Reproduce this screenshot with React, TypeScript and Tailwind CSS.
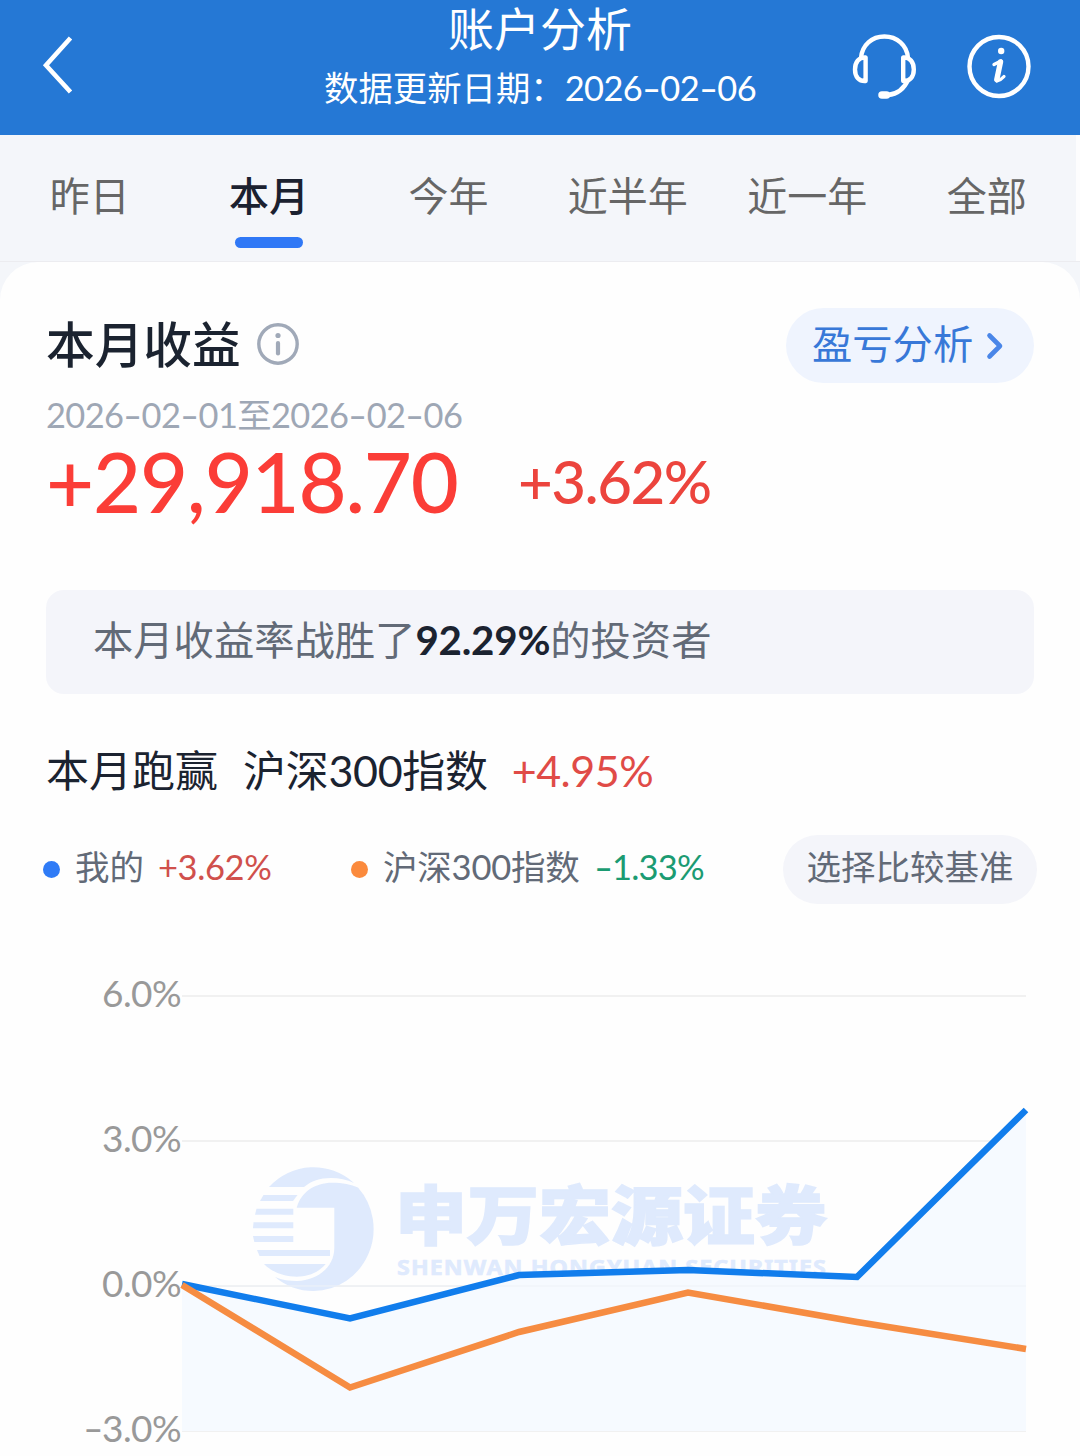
import clsx from 'clsx';

const TABS = ['昨日', '本月', '今年', '近半年', '近一年', '全部'];
const ACTIVE_TAB = '本月';

const GRID = [
  { label: '6.0%', y: 66 },
  { label: '3.0%', y: 211 },
  { label: '0.0%', y: 356 },
  { label: '-3.0%', y: 501 },
];

const MINE = '182,354 350,388.5 519,345 688,340 857,347 1026,180';
const INDEX = '182,355 350,457.5 519,402 688,362.5 857,392 1026,419';

// The hyphen in Lato is short, so it is stretched to the width of a digit
function Num({ value }: { value: string }) {
  return (
    <>
      {value.split(/(-)/).map((part, i) =>
        part === '-' ? (
          <span key={i} className="inline-block w-[0.53em] origin-center scale-x-150 text-center">
            -
          </span>
        ) : (
          part
        ),
      )}
    </>
  );
}

function Header() {
  return (
    <header className="flex h-[135px] justify-between bg-[#2578d5] text-white">
      <div className="flex w-[300px] pl-[40px] pt-[34px]">
        <svg width="36" height="64" viewBox="0 0 36 64" fill="none" stroke="currentColor" strokeWidth="4.6">
          <path d="M30.5 4 6 31.2 30.5 58" />
        </svg>
      </div>
      <div className="flex flex-col items-center whitespace-nowrap">
        <h1 className="h-[60px] text-[46px] leading-[58px]">账户分析</h1>
        <p className="h-[56px] text-[34.4px] leading-[56px]">
          数据更新日期：
          <span className="tracking-[-0.6px]">
            <Num value="2026-02-06" />
          </span>
        </p>
      </div>
      <div className="flex w-[300px] justify-end gap-[49px] pr-[48px] pt-[32px]">
        <svg width="66" height="70" viewBox="0 0 66 70" fill="none" stroke="currentColor" strokeWidth="4.4">
          <path d="M10 26C11 13 21 4.500 33.400 4.500S56 13 57 26" />
          <path d="M14.600 25.500v23.500C8 49.500 4 45 4 37.500S8 25 14.600 25.500Z" strokeLinejoin="round" />
          <path d="M52.200 25.500v23.500C58.800 49.500 62.800 45 62.800 37.500S58.800 25 52.200 25.500Z" strokeLinejoin="round" />
          <path d="M57 48C53 57 46 62 37 63" />
          <path d="M31 63h4.500" strokeWidth="7.500" strokeLinecap="round" />
        </svg>
        <svg width="66" height="70" viewBox="0 0 66 70" fill="none" stroke="currentColor">
          <circle cx="33" cy="34.500" r="29.500" strokeWidth="4.400" />
          <circle cx="35.200" cy="19" r="3.200" fill="currentColor" stroke="none" />
          <path d="M28 32.500 35 29" strokeWidth="3.400" strokeLinecap="round" />
          <path d="M34.500 30 30.800 47.500" strokeWidth="5.400" strokeLinecap="round" />
          <path d="M31 49q4-1 7-4.500" strokeWidth="3.200" strokeLinecap="round" />
        </svg>
      </div>
    </header>
  );
}

function Tabs() {
  return (
    <nav className="flex h-[127px] border-b border-[#ececf0] bg-[#f4f6fa]">
      {TABS.map((tab) => (
        <div key={tab} className="flex w-[179.4px] flex-col items-center pt-[31px]">
          <span
            className={clsx(
              'h-[60px] whitespace-nowrap text-[40px] leading-[60px]',
              tab === ACTIVE_TAB ? 'font-medium text-[#1b2130]' : 'text-[#666666]',
            )}
          >
            {tab}
          </span>
          {tab === ACTIVE_TAB && <span className="mt-[11px] h-[11px] w-[68px] rounded-full bg-[#2f78f6]" />}
        </div>
      ))}
      <i className="flex-1 bg-[#fdfdfe]" />
    </nav>
  );
}

function Earnings() {
  return (
    <section className="px-[46px]">
      <div className="flex items-center justify-between">
        <div className="-mt-[3px] flex items-center">
          <h2 className="text-[48.700px] font-medium leading-[72px] text-[#1b2330]">本月收益</h2>
          <svg className="ml-[16px]" width="42" height="42" viewBox="0 0 42 42" fill="none" stroke="#a0a9b8">
            <circle cx="21" cy="21" r="19.200" strokeWidth="3.400" />
            <circle cx="21" cy="12.500" r="2.600" fill="#a0a9b8" stroke="none" />
            <path d="M21 20v10.500" strokeWidth="4.200" strokeLinecap="round" />
          </svg>
        </div>
        <button className="flex h-[75px] w-[248px] items-center rounded-full bg-[#eff4fe] pl-[26px] text-[40.300px] text-[#3878d8]">
          <span className="-mt-[3px]">盈亏分析</span>
          <svg className="ml-[13px]" width="18" height="30" viewBox="0 0 18 30" fill="none" stroke="#4a86e8" strokeWidth="4.600">
            <path d="m3.500 4.500 10.500 10.500-10.500 10.500" strokeLinecap="round" strokeLinejoin="round" />
          </svg>
        </button>
      </div>
      <p className="mt-[6px] h-[52px] whitespace-nowrap text-[34.400px] leading-[52px] tracking-[-0.600px] text-[#9ea7b5]">
        <Num value="2026-02-01至2026-02-06" />
      </p>
      <div className="flex h-[84px] items-center whitespace-nowrap font-medium">
        <span className="-mt-[4px] w-[472px] text-[83px] leading-[84px] tracking-[-1.200px] text-[#fb3d37]">+29,918.70</span>
        <span className="-mt-[5px] text-[60px] leading-[84px] tracking-[-1.500px] text-[#ec443d]">+3.62%</span>
      </div>
      <div className="mt-[65px] flex h-[104px] items-center rounded-[18px] bg-[#f4f5fa] pl-[47px] text-[40.300px] text-[#626a77]">
        <span className="-mt-[3px] whitespace-nowrap">
          本月收益率战胜了<b className="tracking-[-0.200px] text-[#1b2330]">92.29%</b>的投资者
        </span>
      </div>
    </section>
  );
}

function Compare() {
  return (
    <section>
      <div className="mt-[45px] flex h-[64px] items-center whitespace-nowrap pl-[46px] text-[43px] leading-[64px] text-[#1b2330]">
        <span>本月跑赢</span>
        <span className="ml-[25px] tracking-[-0.300px]">沪深300指数</span>
        <span className="ml-[24px] tracking-[-0.500px] text-[#e04b47]">+4.95%</span>
      </div>
      <div className="mt-[32px] flex h-[69px] items-center whitespace-nowrap pl-[43px] pr-[43px] text-[34.500px] text-[#626a77]">
        <i className="size-[17px] rounded-full bg-[#2f7bf6]" />
        <span className="-mt-[5px] ml-[15px]">我的</span>
        <span className="-mt-[5px] ml-[14px] w-[193px] tracking-[-0.400px] text-[#d0504c]">+3.62%</span>
        <i className="size-[17px] rounded-full bg-[#fb8a3c]" />
        <span className="-mt-[5px] ml-[15px] tracking-[-0.200px]">沪深300指数</span>
        <span className="-mt-[5px] ml-[14px] tracking-[-0.800px] text-[#1b9b72]">
          <Num value="-1.33%" />
        </span>
        <button className="ml-auto h-[69px] w-[254px] rounded-full bg-[#f4f5fa] pb-[5px]">选择比较基准</button>
      </div>
    </section>
  );
}

function Watermark() {
  return (
    <g fill="#dfeafd">
      <path d="M269 257A60.700 62 0 0 1 354 253C347 249.500 339 248 331 248c-11 0-20 3-27 9Z" />
      <path d="M263.500 265h34l-4.500 6h-33Z" />
      <path d="M256.500 278.700h36.800v6h-38.300Z" />
      <path d="M253.500 292.300h39.800v6h-40.300Z" />
      <path d="M253 306h40.300v6h-39Z" />
      <path d="M257 320h73v6h-70.500Z" />
      <path d="M264 334h61.700c-8 9-18 12.700-29 12.700-12 0-24-4-32.700-12.700Z" />
      <path d="M296.700 277.700C301 262 315 252.700 332 252.700c11 0 19 2 26 4.800A60.700 62 0 0 1 313.700 361A60.700 62 0 0 1 275 347C282 350 290 351 297 351c21-1 37.300-14 37.300-33V277.700Z" />
      <text
        x="395"
        y="309"
        fontSize="64"
        fontWeight="900"
        textLength="432"
        lengthAdjust="spacingAndGlyphs"
        stroke="#dfeafd"
        strokeWidth="1.500"
      >
        申万宏源证券
      </text>
      <text
        x="397"
        y="345"
        fontSize="21"
        fontWeight="700"
        textLength="430"
        lengthAdjust="spacingAndGlyphs"
        className="font-['Noto_Sans'] tracking-[1px]"
        stroke="#dfeafd"
        strokeWidth="0.600"
      >
        SHENWAN HONGYUAN SECURITIES
      </text>
    </g>
  );
}

function Chart() {
  return (
    <svg className="mt-[26px] block" width="1080" height="526" viewBox="0 0 1080 526" fill="none">
      {GRID.map(({ label, y }) => (
        <path key={label} d={`M182 ${y}H1026`} stroke="#ededed" strokeWidth="1.500" />
      ))}
      <Watermark />
      <polygon points={`${MINE} 1026,501 182,501`} fill="#f6faff" />
      <path d="M182 356H1026" stroke="#eef2f7" />
      <polyline points={MINE} stroke="#117dec" strokeWidth="6.500" />
      <polyline points={INDEX} stroke="#f68c42" strokeWidth="6.500" />
      {GRID.map(({ label, y }) => (
        <g key={label} fill="#999999" fontSize="37" letterSpacing="-0.600">
          <text x="181" y={y + 11} textAnchor="end">
            {label.replace('-', '')}
          </text>
          {label.startsWith('-') && (
            <text transform={`translate(83 ${y + 11}) scale(1.5 1)`}>-</text>
          )}
        </g>
      ))}
    </svg>
  );
}

export default function App() {
  return (
    <main className="h-[1456px] w-[1080px] overflow-hidden bg-[#f4f6fa] font-['Lato','Noto_Sans_CJK_SC',sans-serif]">
      <Header />
      <Tabs />
      <div className="rounded-t-[38px] bg-[#fefefe] pt-[46px]">
        <Earnings />
        <Compare />
        <Chart />
      </div>
    </main>
  );
}
